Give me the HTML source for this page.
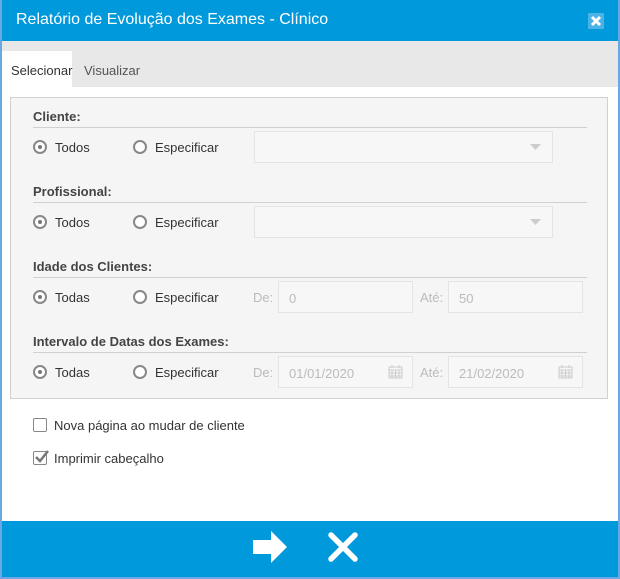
<!DOCTYPE html>
<html><head><meta charset="utf-8"><style>
*{margin:0;padding:0;box-sizing:border-box}
body{width:620px;height:579px;background:#6aa8e4;font-family:"Liberation Sans",sans-serif;position:relative;overflow:hidden}
.a{position:absolute}
.hdr{left:2px;top:0;width:616px;height:41px;background:#0099db}
.title{left:16px;top:11px;color:#fff;font-size:16px}
.main{left:2px;top:41px;width:616px;height:480px;background:#fff}
.tabs{left:2px;top:41px;width:616px;height:46px;background:#e8e8e8}
.tab{font-size:13px;color:#333}
.box{left:10px;top:97px;width:598px;height:302px;background:#f5f5f5;border:1px solid #d0d0d0}
.h{font-size:13px;font-weight:bold;color:#444;left:33px}
.ln{left:33px;width:554px;height:1px;background:#d0d0d0}
.r{width:14px;height:14px;border:2px solid #888;border-radius:50%;background:#fff}
.r.on::after{content:"";position:absolute;left:3px;top:3px;width:4px;height:4px;border-radius:50%;background:#777}
.t{font-size:13px;color:#333}
.in{background:#f7f7f7;border:1px solid #e4e4e4;height:32px}
.ph{font-size:13px;color:#bbb}
.lb{font-size:13px;color:#bbb}
.cb{width:14px;height:14px;border:1px solid #888;border-radius:2px;background:#fff}
.ftr{left:2px;top:521px;width:616px;height:56px;background:#0099db}
</style></head><body>
<div class="a hdr"></div>
<div class="a title">Relatório de Evolução dos Exames - Clínico</div>
<div class="a" style="left:588px;top:13px;width:16px;height:16px;background:#4cb3e6"></div>
<svg class="a" style="left:588px;top:13px" width="16" height="16"><path d="M4 4L12 12M12 4L4 12" stroke="#fff" stroke-width="3"/></svg>
<div class="a main"></div>
<div class="a tabs"></div>
<div class="a" style="left:2px;top:51px;width:70px;height:36px;background:#fff"></div>
<div class="a tab" style="left:11px;top:63px">Selecionar</div>
<div class="a tab" style="left:84px;top:63px;color:#555">Visualizar</div>
<div class="a box"></div>

<div class="a h" style="top:109px">Cliente:</div>
<div class="a ln" style="top:127px"></div>
<div class="a h" style="top:184px">Profissional:</div>
<div class="a ln" style="top:202px"></div>
<div class="a h" style="top:259px">Idade dos Clientes:</div>
<div class="a ln" style="top:277px"></div>
<div class="a h" style="top:334px">Intervalo de Datas dos Exames:</div>
<div class="a ln" style="top:352px"></div>

<div class="a r on" style="left:33px;top:140px"></div><div class="a t" style="left:55px;top:140px">Todos</div>
<div class="a r" style="left:133px;top:140px"></div><div class="a t" style="left:155px;top:140px">Especificar</div>
<div class="a in" style="left:254px;top:131px;width:299px"></div>
<svg class="a" style="left:530px;top:144px" width="12" height="6"><path d="M0 0H11L5.5 6Z" fill="#ccc"/></svg>

<div class="a r on" style="left:33px;top:215px"></div><div class="a t" style="left:55px;top:215px">Todos</div>
<div class="a r" style="left:133px;top:215px"></div><div class="a t" style="left:155px;top:215px">Especificar</div>
<div class="a in" style="left:254px;top:206px;width:299px"></div>
<svg class="a" style="left:530px;top:219px" width="12" height="6"><path d="M0 0H11L5.5 6Z" fill="#ccc"/></svg>

<div class="a r on" style="left:33px;top:290px"></div><div class="a t" style="left:55px;top:290px">Todas</div>
<div class="a r" style="left:133px;top:290px"></div><div class="a t" style="left:155px;top:290px">Especificar</div>
<div class="a lb" style="left:253px;top:290px">De:</div>
<div class="a in" style="left:278px;top:281px;width:135px"></div><div class="a ph" style="left:289px;top:291px">0</div>
<div class="a lb" style="left:420px;top:290px">Até:</div>
<div class="a in" style="left:448px;top:281px;width:135px"></div><div class="a ph" style="left:459px;top:291px">50</div>

<div class="a r on" style="left:33px;top:365px"></div><div class="a t" style="left:55px;top:365px">Todas</div>
<div class="a r" style="left:133px;top:365px"></div><div class="a t" style="left:155px;top:365px">Especificar</div>
<div class="a lb" style="left:253px;top:365px">De:</div>
<div class="a in" style="left:278px;top:356px;width:135px"></div><div class="a ph" style="left:289px;top:366px">01/01/2020</div>
<svg class="a" style="left:388px;top:364px" width="15" height="15"><rect x="1" y="3" width="13" height="11" fill="none" stroke="#ccc"/><path d="M1 6H14M1 9H14M1 12H14M4 6V14M7.5 6V14M11 6V14M4 1V4M11 1V4" stroke="#ccc"/></svg>
<div class="a lb" style="left:420px;top:365px">Até:</div>
<div class="a in" style="left:448px;top:356px;width:135px"></div><div class="a ph" style="left:459px;top:366px">21/02/2020</div>
<svg class="a" style="left:558px;top:364px" width="15" height="15"><rect x="1" y="3" width="13" height="11" fill="none" stroke="#ccc"/><path d="M1 6H14M1 9H14M1 12H14M4 6V14M7.5 6V14M11 6V14M4 1V4M11 1V4" stroke="#ccc"/></svg>

<div class="a cb" style="left:33px;top:418px"></div><div class="a t" style="left:54px;top:418px">Nova página ao mudar de cliente</div>
<div class="a cb" style="left:33px;top:451px"></div>
<svg class="a" style="left:34px;top:449px" width="16" height="15"><path d="M2 8L6 12L14 2" fill="none" stroke="#777" stroke-width="2.5"/></svg>
<div class="a t" style="left:54px;top:451px">Imprimir cabeçalho</div>

<div class="a ftr"></div>
<svg class="a" style="left:252px;top:530px" width="36" height="34"><path d="M1 10H19V1L35 17L19 33V24H1Z" fill="#fff"/></svg>
<svg class="a" style="left:326px;top:530px" width="34" height="34"><path d="M5 5L29 29M29 5L5 29" stroke="#fff" stroke-width="5.5" stroke-linecap="round"/></svg>
</body></html>
